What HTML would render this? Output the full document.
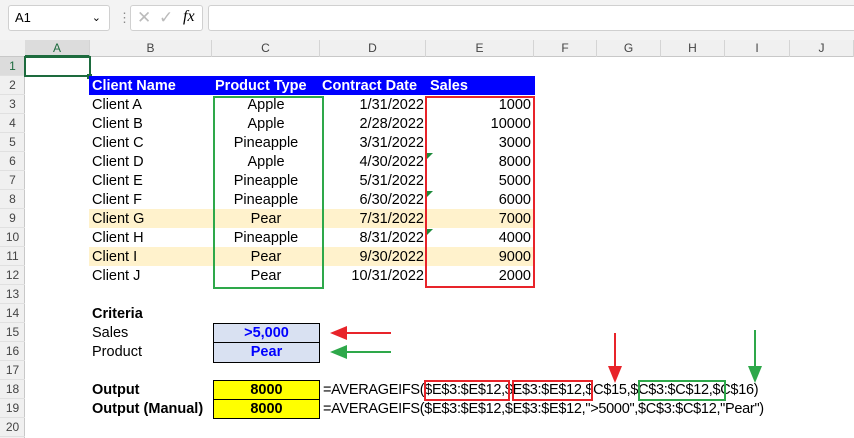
<!DOCTYPE html>
<html><head><meta charset="utf-8"><style>
*{margin:0;padding:0;box-sizing:border-box}
body{width:854px;height:438px;background:#fff;font-family:"Liberation Sans",Arial,sans-serif;position:relative;overflow:hidden}
.a{position:absolute}
.t{position:absolute;font-size:14.5px;line-height:19px;height:19px;white-space:nowrap;color:#000}
.ch{position:absolute;top:40px;height:17px;font-size:12px;line-height:17px;text-align:center;color:#444;border-right:1px solid #d4d4d4}
.rh{position:absolute;left:0;width:25px;font-size:12px;text-align:center;color:#444;height:19px;line-height:19px;border-bottom:1px solid #e0e0e0}
.r{text-align:right}.c{text-align:center}.b{font-weight:bold}
</style></head><body>
<div class="a" style="left:0;top:0;width:854px;height:40px;background:#f3f3f3"></div>
<div class="a" style="left:8px;top:5px;width:102px;height:26px;background:#fff;border:1px solid #d0d0d0;border-radius:3px;font-size:13px;line-height:24px;padding-left:6px">A1<span style="position:absolute;right:8px;top:0;font-size:11px">&#8964;</span></div>
<div class="a" style="left:118px;top:10px;font-size:13px;color:#888">&#8942;</div>
<div class="a" style="left:130px;top:5px;width:73px;height:26px;background:#fff;border:1px solid #d0d0d0;border-radius:3px">
<span class="a" style="left:6px;top:2px;color:#bbb;font-size:17px">&#10005;</span><span class="a" style="left:28px;top:2px;color:#bbb;font-size:17px">&#10003;</span><span class="a" style="left:52px;top:2px;font-family:'Liberation Serif',serif;font-style:italic;font-size:16px">fx</span></div>
<div class="a" style="left:208px;top:5px;width:650px;height:26px;background:#fff;border:1px solid #d0d0d0;border-radius:3px"></div>
<div class="a" style="left:0;top:40px;width:854px;height:17px;background:#f0f0f0;border-bottom:1px solid #c8c8c8"></div>
<div class="a" style="left:0;top:57px;width:25px;height:381px;background:#f0f0f0;border-right:1px solid #c8c8c8"></div>
<div class="ch" style="left:25px;width:65px;background:#dcdcdc;color:#1d6b3e;border-bottom:2px solid #1d6b3e">A</div>
<div class="ch" style="left:90px;width:122px">B</div>
<div class="ch" style="left:212px;width:108px">C</div>
<div class="ch" style="left:320px;width:106px">D</div>
<div class="ch" style="left:426px;width:108px">E</div>
<div class="ch" style="left:534px;width:63px">F</div>
<div class="ch" style="left:597px;width:64px">G</div>
<div class="ch" style="left:661px;width:64px">H</div>
<div class="ch" style="left:725px;width:65px">I</div>
<div class="ch" style="left:790px;width:64px">J</div>
<div class="rh" style="top:57px;background:#dcdcdc;color:#1d6b3e">1</div>
<div class="rh" style="top:76px">2</div><div class="rh" style="top:95px">3</div><div class="rh" style="top:114px">4</div><div class="rh" style="top:133px">5</div><div class="rh" style="top:152px">6</div><div class="rh" style="top:171px">7</div><div class="rh" style="top:190px">8</div><div class="rh" style="top:209px">9</div><div class="rh" style="top:228px">10</div><div class="rh" style="top:247px">11</div><div class="rh" style="top:266px">12</div><div class="rh" style="top:285px">13</div><div class="rh" style="top:304px">14</div><div class="rh" style="top:323px">15</div><div class="rh" style="top:342px">16</div><div class="rh" style="top:361px">17</div><div class="rh" style="top:380px">18</div><div class="rh" style="top:399px">19</div><div class="rh" style="top:418px">20</div>
<div class="a" style="left:24px;top:56px;width:67px;height:21px;border:2px solid #1d6b3e"></div>
<div class="a" style="left:87px;top:74px;width:5px;height:5px;background:#1d6b3e"></div>
<!-- banded rows -->
<div class="a" style="left:89px;top:209px;width:446px;height:19px;background:#fff2cc"></div>
<div class="a" style="left:89px;top:247px;width:446px;height:19px;background:#fff2cc"></div>
<div class="a" style="left:89px;top:76px;width:446px;height:19px;background:#0000ff"></div>
<div class="t b" style="left:92px;top:77px;color:#fff">Client Name</div>
<div class="t b" style="left:215px;top:77px;color:#fff">Product Type</div>
<div class="t b" style="left:322px;top:77px;color:#fff">Contract Date</div>
<div class="t b" style="left:430px;top:77px;color:#fff">Sales</div>
<div class="a" style="left:213px;top:96px;width:111px;height:193px;border:2px solid #2ea84a"></div>
<div class="a" style="left:425px;top:96px;width:110px;height:192px;border:2px solid #e8242a"></div>
<div id="rows"></div>
<div class="t" style="left:92px;top:96px">Client A</div><div class="t c" style="left:212px;top:96px;width:108px">Apple</div><div class="t r" style="left:320px;top:96px;width:104px">1/31/2022</div><div class="t r" style="left:426px;top:96px;width:105px">1000</div>
<div class="t" style="left:92px;top:115px">Client B</div><div class="t c" style="left:212px;top:115px;width:108px">Apple</div><div class="t r" style="left:320px;top:115px;width:104px">2/28/2022</div><div class="t r" style="left:426px;top:115px;width:105px">10000</div>
<div class="t" style="left:92px;top:134px">Client C</div><div class="t c" style="left:212px;top:134px;width:108px">Pineapple</div><div class="t r" style="left:320px;top:134px;width:104px">3/31/2022</div><div class="t r" style="left:426px;top:134px;width:105px">3000</div>
<div class="t" style="left:92px;top:153px">Client D</div><div class="t c" style="left:212px;top:153px;width:108px">Apple</div><div class="t r" style="left:320px;top:153px;width:104px">4/30/2022</div><div class="t r" style="left:426px;top:153px;width:105px">8000</div>
<div class="t" style="left:92px;top:172px">Client E</div><div class="t c" style="left:212px;top:172px;width:108px">Pineapple</div><div class="t r" style="left:320px;top:172px;width:104px">5/31/2022</div><div class="t r" style="left:426px;top:172px;width:105px">5000</div>
<div class="t" style="left:92px;top:191px">Client F</div><div class="t c" style="left:212px;top:191px;width:108px">Pineapple</div><div class="t r" style="left:320px;top:191px;width:104px">6/30/2022</div><div class="t r" style="left:426px;top:191px;width:105px">6000</div>
<div class="t" style="left:92px;top:210px">Client G</div><div class="t c" style="left:212px;top:210px;width:108px">Pear</div><div class="t r" style="left:320px;top:210px;width:104px">7/31/2022</div><div class="t r" style="left:426px;top:210px;width:105px">7000</div>
<div class="t" style="left:92px;top:229px">Client H</div><div class="t c" style="left:212px;top:229px;width:108px">Pineapple</div><div class="t r" style="left:320px;top:229px;width:104px">8/31/2022</div><div class="t r" style="left:426px;top:229px;width:105px">4000</div>
<div class="t" style="left:92px;top:248px">Client I</div><div class="t c" style="left:212px;top:248px;width:108px">Pear</div><div class="t r" style="left:320px;top:248px;width:104px">9/30/2022</div><div class="t r" style="left:426px;top:248px;width:105px">9000</div>
<div class="t" style="left:92px;top:267px">Client J</div><div class="t c" style="left:212px;top:267px;width:108px">Pear</div><div class="t r" style="left:320px;top:267px;width:104px">10/31/2022</div><div class="t r" style="left:426px;top:267px;width:105px">2000</div>
<svg class="a" style="left:0;top:0" width="854" height="438">
<polygon points="427,153 433,153 427,159" fill="#1d8a3a"/>
<polygon points="427,191 433,191 427,197" fill="#1d8a3a"/>
<polygon points="427,229 433,229 427,235" fill="#1d8a3a"/>
<line x1="345" y1="333" x2="391" y2="333" stroke="#e8242a" stroke-width="2"/><polygon points="330,333 347,326 347,340" fill="#e8242a"/>
<line x1="345" y1="352" x2="391" y2="352" stroke="#2ea84a" stroke-width="2"/><polygon points="330,352 347,345 347,359" fill="#2ea84a"/>
<line x1="615" y1="333" x2="615" y2="368" stroke="#e8242a" stroke-width="2"/><polygon points="615,383 608,366 622,366" fill="#e8242a"/>
<line x1="755" y1="330" x2="755" y2="368" stroke="#2ea84a" stroke-width="2"/><polygon points="755,383 748,366 762,366" fill="#2ea84a"/>
</svg>
<div class="t b" style="left:92px;top:305px">Criteria</div>
<div class="t" style="left:92px;top:324px">Sales</div>
<div class="t" style="left:92px;top:343px">Product</div>
<div class="a" style="left:213px;top:323px;width:107px;height:40px;background:#d9e1f2;border:1px solid #000"></div>
<div class="a" style="left:213px;top:342px;width:107px;height:1px;background:#000"></div>
<div class="t b c" style="left:213px;top:324px;width:107px;color:#0000ff">&gt;5,000</div>
<div class="t b c" style="left:213px;top:343px;width:107px;color:#0000ff">Pear</div>
<div class="t b" style="left:92px;top:381px">Output</div>
<div class="t b" style="left:92px;top:400px">Output (Manual)</div>
<div class="a" style="left:213px;top:380px;width:107px;height:39px;background:#ffff00;border:1px solid #000"></div>
<div class="a" style="left:213px;top:399px;width:107px;height:1px;background:#000"></div>
<div class="t b c" style="left:213px;top:381px;width:107px">8000</div>
<div class="t b c" style="left:213px;top:400px;width:107px">8000</div>
<div class="t" style="left:323px;top:381px;letter-spacing:-0.3px">=AVERAGEIFS($E$3:$E$12,$E$3:$E$12,$C$15,$C$3:$C$12,$C$16)</div>
<div class="t" style="left:323px;top:400px;letter-spacing:-0.3px">=AVERAGEIFS($E$3:$E$12,$E$3:$E$12,"&gt;5000",$C$3:$C$12,"Pear")</div>
<div class="a" style="left:424px;top:380px;width:86px;height:21px;border:2px solid #e8242a"></div>
<div class="a" style="left:512px;top:380px;width:81px;height:21px;border:2px solid #e8242a"></div>
<div class="a" style="left:638px;top:380px;width:88px;height:21px;border:2px solid #2ea84a"></div>
</body></html>
